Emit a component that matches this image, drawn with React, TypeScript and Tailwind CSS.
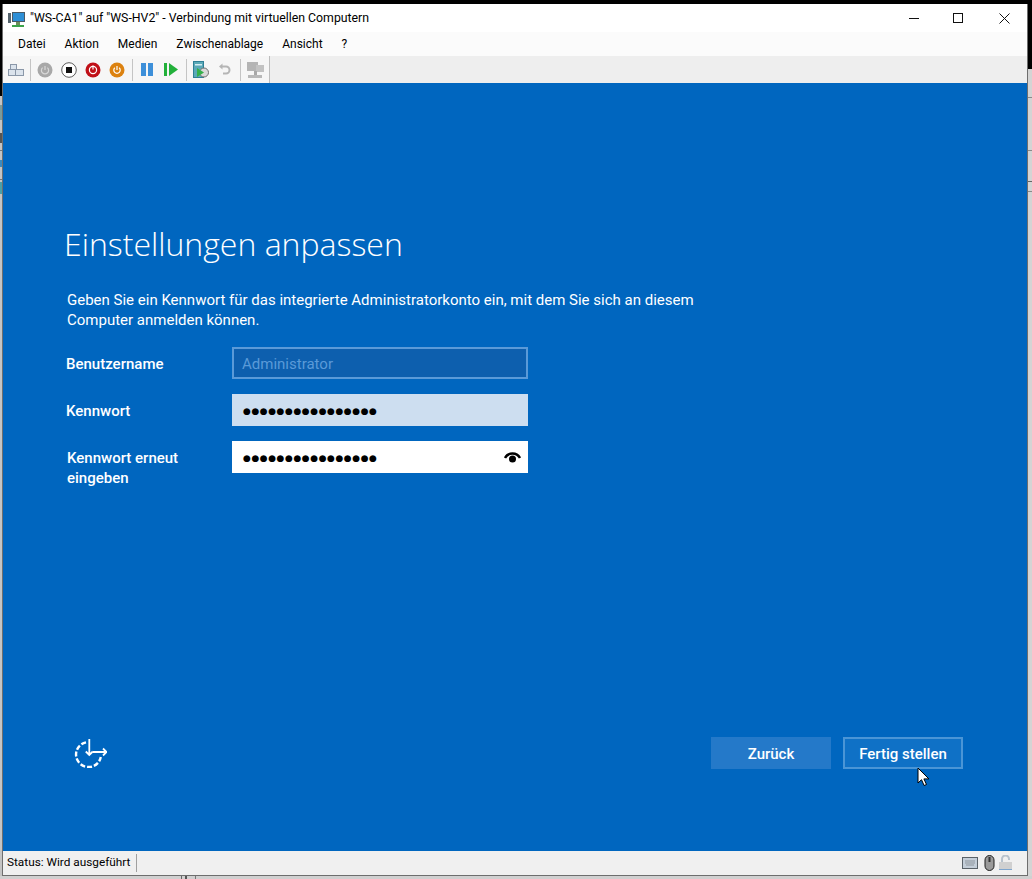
import type { ReactNode } from "react";

const sepBase = "w-px h-[22px] bg-[#c4c4c4]";
const chrome = "font-['Roboto','Noto_Sans',sans-serif] text-black";

function Toolbar() {
  return (
    <div className="flex h-[27px] shrink-0 bg-[#eeeeee]">
      <div className="flex items-center h-[27px] w-[267px] bg-[#f6f6f6] border-r border-[#bdbdbd] pl-[5px]">
        <svg width="16" height="14" viewBox="0 0 16 14">
          <rect x="2.5" y="1.5" width="6" height="5" fill="#dbe3ec" stroke="#8a97a8" />
          <rect x="0.5" y="6.5" width="7" height="6" fill="#dbe3ec" stroke="#8a97a8" />
          <rect x="7.5" y="6.5" width="8" height="6" fill="#dbe3ec" stroke="#8a97a8" />
        </svg>
        <div className={`${sepBase} mx-[6px]`} />
        <svg className="mr-[8px]" width="16" height="16" viewBox="0 0 16 16">
          <circle cx="8" cy="8" r="7.5" fill="#a8a8a8" />
          <path d="M8 4v4M5.6 5.6a3.6 3.6 0 1 0 4.8 0" stroke="#d8d8d8" strokeWidth="1.2" fill="none" />
        </svg>
        <svg className="mr-[8px]" width="16" height="16" viewBox="0 0 16 16">
          <circle cx="8" cy="8" r="7.3" fill="#ffffff" stroke="#5c5c5c" />
          <rect x="5" y="5" width="6" height="6" fill="#111111" />
        </svg>
        <svg className="mr-[8px]" width="16" height="16" viewBox="0 0 16 16">
          <circle cx="8" cy="8" r="7.5" fill="#c01018" />
          <circle cx="8" cy="8" r="3.6" fill="none" stroke="#ffffff" strokeWidth="1.2" />
          <path d="M8 3.5v4" stroke="#ffffff" strokeWidth="1.2" />
        </svg>
        <svg width="16" height="16" viewBox="0 0 16 16">
          <circle cx="8" cy="8" r="7.5" fill="#dc8210" />
          <path d="M8 4v4M5.8 5.8a3.2 3.2 0 1 0 4.4 0" stroke="#ffffff" strokeWidth="1.2" fill="none" />
        </svg>
        <div className={`${sepBase} ml-[7px] mr-[8px]`} />
        <svg className="mr-[11px]" width="12" height="13" viewBox="0 0 12 13">
          <rect x="0" y="0" width="5" height="13" fill="#3d8fd9" />
          <rect x="7" y="0" width="5" height="13" fill="#3d8fd9" />
        </svg>
        <svg width="14" height="13" viewBox="0 0 14 13">
          <rect x="0" y="0" width="3" height="13" fill="#22b03a" />
          <path d="M5 0l9 6.5-9 6.5z" fill="#22b03a" />
        </svg>
        <div className={`${sepBase} ml-[8px] mr-[6px]`} />
        <svg className="mr-[9px]" width="16" height="17" viewBox="0 0 16 17">
          <rect x="0.5" y="0.5" width="10" height="16" fill="#5aa9b8" stroke="#2f7f96" />
          <rect x="2" y="3" width="7" height="1.5" fill="#d7edf2" />
          <circle cx="11" cy="11.5" r="4.5" fill="#d9d9d9" stroke="#6f6f6f" />
          <path d="M4 7l7 4.5-7 4.5z" fill="#35b04a" />
        </svg>
        <svg width="14" height="14" viewBox="0 0 14 14">
          <path d="M3 3.5h5a3.5 3.5 0 0 1 0 7H5" fill="none" stroke="#b5b5b5" strokeWidth="2" />
          <path d="M4.5 0.5v6L1 3.5z" fill="#b5b5b5" />
        </svg>
        <div className={`${sepBase} ml-[8px] mr-[6px]`} />
        <svg width="17" height="18" viewBox="0 0 17 18">
          <rect x="0" y="1" width="11" height="9" fill="#b4b4b4" />
          <rect x="9" y="4" width="8" height="7" fill="#c2c2c2" />
          <rect x="7" y="10" width="3" height="4" fill="#a8a8a8" />
          <rect x="1" y="14" width="14" height="3" fill="#b8b8b8" />
        </svg>
      </div>
    </div>
  );
}

function Field({ label, children }: { label: ReactNode; children: ReactNode }) {
  return (
    <div className="flex">
      <div className="w-[168px] pl-[2px] pt-[7px] text-[15px] leading-[20px] font-medium text-white">{label}</div>
      {children}
    </div>
  );
}

const dots = "●●●●●●●●●●●●●●●●";

export default function App() {
  return (
    <div className="flex h-[879px] w-[1032px] flex-col overflow-hidden bg-black font-['Roboto','Noto_Sans',sans-serif]">
      <div className="h-[4px] shrink-0 bg-black" />
      <div className="flex h-[872px] shrink-0">
        {/* background windows showing at the edges */}
        <div className="flex w-[2px] shrink-0 flex-col bg-[#c4c4c4]">
          <div className="h-[92px] bg-black" />
          <div className="mt-[9px] h-[15px] bg-[#7a9a9a]" />
          <div className="mt-[13px] h-[10px] bg-[#555555]" />
          <div className="mt-[7px] h-px bg-[#777777]" />
          <div className="mt-[9px] h-[7px] bg-[#3a8ac0]" />
          <div className="mt-[12px] h-px bg-[#777777]" />
          <div className="mt-[2px] h-[12px] bg-[#4aa0a8]" />
        </div>
        <div className="flex w-[1026px] shrink-0 flex-col border-x border-b border-[#6e6e6e] bg-white">
          <div className="flex h-[28px] shrink-0 items-center bg-white pl-[5px]">
            <svg width="17" height="16" viewBox="0 0 17 16" className="mt-[4px]">
              <rect x="4.5" y="0.5" width="12" height="9" fill="#2e8fd6" stroke="#4a5a66" />
              <rect x="0" y="1" width="3" height="10" fill="#56646e" />
              <rect x="8" y="10" width="4" height="3" fill="#6d8f5a" />
              <rect x="4" y="13" width="12" height="2" fill="#3ca34a" />
            </svg>
            <span className={`ml-[5px] text-[12.3px] ${chrome}`}>
              "WS-CA1" auf "WS-HV2" - Verbindung mit virtuellen Computern
            </span>
            <div className="ml-auto flex items-center">
              <svg className="mr-[34px]" width="10" height="11" viewBox="0 0 10 11">
                <path d="M0 5.5h10" stroke="#111111" />
              </svg>
              <svg className="mr-[35px]" width="11" height="11" viewBox="0 0 11 11">
                <rect x="0.5" y="0.5" width="9" height="9" fill="none" stroke="#111111" />
              </svg>
              <svg className="mr-[17px]" width="11" height="11" viewBox="0 0 11 11">
                <path d="M0.5 0.5l10 10M10.5 0.5l-10 10" stroke="#111111" />
              </svg>
            </div>
          </div>
          <div className={`flex h-[24px] shrink-0 items-center gap-[19px] bg-[#fbfbfb] pl-[15px] text-[12px] ${chrome}`}>
            <span>Datei</span>
            <span>Aktion</span>
            <span>Medien</span>
            <span>Zwischenablage</span>
            <span>Ansicht</span>
            <span>?</span>
          </div>
          <Toolbar />
          <div className="relative flex flex-1 flex-col bg-[#0066bf] text-white">
            <div className="pl-[61px] pt-[139px]">
              <h1 className="font-['Open_Sans',sans-serif] text-[32px] leading-[44px] font-light">Einstellungen anpassen</h1>
              <p className="mt-[24px] w-[660px] pl-[3px] text-[15px] leading-[20px]">
                Geben Sie ein Kennwort für das integrierte Administratorkonto ein, mit dem Sie sich an diesem Computer anmelden können.
              </p>
              <div className="mt-[17px] flex flex-col gap-[15px]">
                <Field label="Benutzername">
                  <div className="flex h-[32px] w-[296px] items-center border-2 border-[#5a9ad8] bg-[#0d5fae] pl-[8px] pt-[2px] text-[15px] text-[#5a9ad8]">
                    Administrator
                  </div>
                </Field>
                <Field label="Kennwort">
                  <div className="flex h-[32px] w-[296px] items-center bg-[#cddef0] pl-[11px] pt-[3px] font-['DejaVu_Sans',sans-serif] text-[9px] tracking-[0.55px] text-black">
                    {dots}
                  </div>
                </Field>
                <Field label={<span className="block pl-px">Kennwort erneut<br />eingeben</span>}>
                  <div className="flex h-[32px] w-[296px] items-center justify-between bg-white pl-[11px] pr-[7px] font-['DejaVu_Sans',sans-serif] text-[9px] tracking-[0.55px] text-black">
                    <span className="pt-[3px]">{dots}</span>
                    <svg width="17" height="11" viewBox="0 0 17 11">
                      <path d="M1 6a8.5 8.5 0 0 1 15 0" fill="none" stroke="#000000" strokeWidth="2.5" />
                      <circle cx="8.5" cy="7" r="3.5" fill="#000000" />
                    </svg>
                  </div>
                </Field>
              </div>
            </div>
            <div className="mt-auto flex items-center justify-between pr-[64px] pl-[70px] pb-[82px]">
              <svg width="34" height="30" viewBox="0 0 34 30">
                <path d="M13 4.3A12.5 12.5 0 1 0 27.8 19" fill="none" stroke="#ffffff" strokeWidth="2.4" strokeDasharray="5 2" />
                <path d="M16.3 1v16M12.8 13.5l3.5 3.5 3.5-3.5M20 14h14M30 10.5l3.5 3.5-3.5 3.5" fill="none" stroke="#ffffff" strokeWidth="1.8" />
              </svg>
              <div className="flex gap-[12px]">
                <div className="flex h-[32px] w-[120px] items-center justify-center bg-[#2479c9] pt-[2px] text-[15px] font-medium">Zurück</div>
                <div className="flex h-[32px] w-[120px] items-center justify-center border-2 border-[#4a95d6] bg-[#0f71c6] pt-[2px] text-[15px] font-medium">Fertig stellen</div>
              </div>
            </div>
            <svg className="absolute left-[914px] top-[684px]" width="13" height="19" viewBox="0 0 13 19">
              <path d="M1 1v15l3.5-3.3 2.6 5.8 2.4-1-2.6-5.6h5z" fill="#ffffff" stroke="#000000" />
            </svg>
          </div>
          <div className={`flex h-[24px] shrink-0 items-center bg-[#f0f0f0] pl-[4px] text-[11.8px] ${chrome}`}>
            <span>Status: Wird ausgeführt</span>
            <div className="ml-[6px] h-[18px] w-px bg-[#a0a0a0]" />
            <div className="ml-auto flex items-center pr-[15px]">
              <svg width="16" height="12" viewBox="0 0 16 12">
                <rect x="0.5" y="0.5" width="15" height="11" fill="#c4ced8" stroke="#5a6268" />
                <path d="M3 4h10M3 6h10M4 8h8" stroke="#8f979e" />
              </svg>
              <svg className="ml-[6px]" width="11" height="16" viewBox="0 0 11 16">
                <rect x="1" y="0.5" width="9" height="15" rx="4.5" fill="#9a9a9a" stroke="#1f1f1f" />
                <path d="M5.5 2v5" stroke="#333333" strokeWidth="2" />
              </svg>
              <svg className="ml-[4px]" width="13" height="16" viewBox="0 0 13 16">
                <path d="M3 7V4a3.5 3.5 0 0 1 7 0v1" fill="none" stroke="#b8c2cc" strokeWidth="2" />
                <rect x="0" y="7" width="13" height="7" fill="#d0d0d0" />
                <rect x="0" y="14" width="13" height="1" fill="#7fa6cf" />
              </svg>
            </div>
          </div>
        </div>
        <div className="flex w-[4px] shrink-0 flex-col bg-[#d4d4d4]">
          <div className="h-[65px] bg-black" />
          <div className="mt-[28px] h-px bg-[#8a8a8a]" />
          <div className="mt-[52px] h-px bg-[#8a8a8a]" />
          <div className="mt-[30px] h-px bg-[#666666]" />
          <div className="mt-[9px] h-px bg-[#8a8a8a]" />
        </div>
      </div>
      <div className="flex h-[3px] shrink-0 bg-[#d0d0d0] pl-[181px]">
        <div className="w-px bg-[#666666]" />
        <div className="ml-[3px] w-[2px] bg-[#555555]" />
        <div className="ml-[8px] w-px bg-[#777777]" />
      </div>
    </div>
  );
}
